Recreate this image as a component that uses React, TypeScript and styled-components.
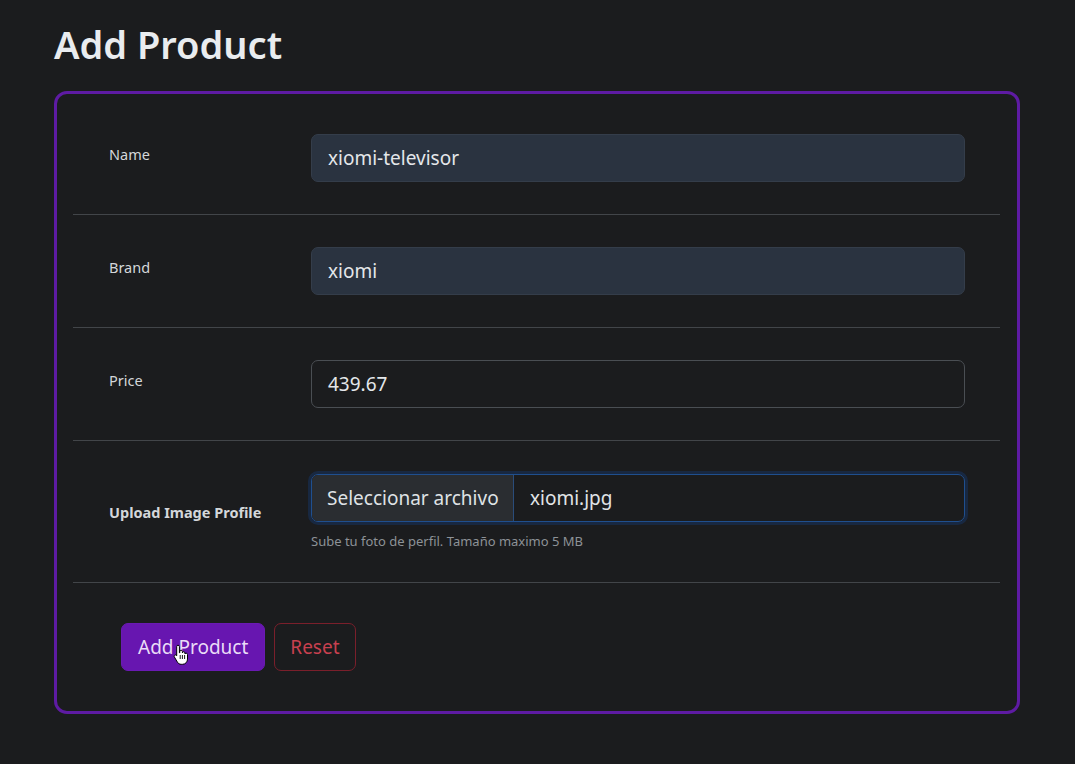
import React from "react";
import styled, { createGlobalStyle } from "styled-components";

const Global = createGlobalStyle`
  html, body { margin: 0; padding: 0; background: #1b1c1e; }
  body { font-family: "Noto Sans", "Open Sans", sans-serif; color: #dee2e6; }
  * { box-sizing: border-box; }
`;

const Page = styled.div`
  padding: 20px 55px 40px 54px;
  min-height: 764px;
`;

const Title = styled.h1`
  margin: 0 0 23px 0;
  font-size: 38px;
  line-height: 48px;
  font-weight: 600;
  color: #e9ecef;
`;

const Card = styled.form`
  border: 3px solid #5e1ba3;
  border-radius: 13px;
  padding: 0 17px 40px 16px;
  display: flex;
  flex-direction: column;
`;

const Row = styled.div<{ $top?: number }>`
  display: grid;
  grid-template-columns: 202px 1fr;
  align-items: center;
  padding: ${(p) => p.$top ?? 32}px 35px 32px 36px;
  border-bottom: 1px solid #424549;
`;

const Label = styled.label<{ $bold?: boolean }>`
  font-size: 14.5px;
  line-height: 20px;
  margin-bottom: ${(p) => (p.$bold ? 0 : 8)}px;
  color: #d4d7da;
  font-weight: ${(p) => (p.$bold ? 700 : 400)};
`;

const Input = styled.div<{ $filled?: boolean }>`
  height: 48px;
  display: flex;
  align-items: center;
  padding: 0 16px;
  font-size: 19px;
  color: #e4e7ea;
  border-radius: 7px;
  background: ${(p) => (p.$filled ? "#2a3340" : "transparent")};
  border: 1px solid ${(p) => (p.$filled ? "#343d4a" : "#4a4e53")};
`;

const FileCol = styled.div`
  display: flex;
  flex-direction: column;
`;

const FileBox = styled.div`
  height: 48px;
  display: flex;
  align-items: stretch;
  border: 1px solid #1f4f8f;
  border-radius: 7px;
  box-shadow: 0 0 0 3px rgba(20, 70, 150, 0.3);
  overflow: hidden;
  font-size: 19px;
`;

const FileButton = styled.span`
  display: flex;
  align-items: center;
  padding: 0 16px 0 15px;
  width: 202px;
  background: #2a2d31;
  border-right: 1px solid #2a4c7a;
  color: #dfe2e5;
  white-space: nowrap;
`;

const FileName = styled.span`
  display: flex;
  align-items: center;
  padding-left: 16px;
  color: #e1e4e7;
`;

const Help = styled.div`
  margin-top: 10px;
  font-size: 13px;
  color: #8d9297;
`;

const Actions = styled.div`
  display: flex;
  gap: 9px;
  padding: 40px 0 0 48px;
`;

const Button = styled.button<{ $variant: "primary" | "danger" }>`
  position: relative;
  height: 48px;
  padding: 0 ${(p) => (p.$variant === "primary" ? 16 : 15)}px;
  font-family: inherit;
  font-size: 19px;
  border-radius: 7px;
  cursor: pointer;
  ${(p) =>
    p.$variant === "primary"
      ? `background: #6716b0; border: 1px solid #6a1ab3; color: #eadcf7;`
      : `background: transparent; border: 1px solid #7a1f2b; color: #c8404f;`}
`;

const Cursor = styled.svg`
  position: absolute;
  left: 51px;
  top: 20px;
  width: 16px;
  height: 21px;
  pointer-events: none;
`;

const HandCursor = () => (
  <Cursor viewBox="0 0 16 21">
    <path
      d="M5 1.2c.8 0 1.4.6 1.4 1.4v6.2l.4-.1V7.5c0-.8.6-1.3 1.3-1.3s1.3.5 1.3 1.3v1.3c.1-.7.7-1.1 1.3-1.1.7 0 1.3.6 1.3 1.3v1c.2-.5.7-.8 1.2-.8.7 0 1.3.6 1.3 1.3v4.6c0 2.8-2 5.2-4.9 5.2H8.2c-1.6 0-2.8-.7-3.7-2L1.4 13c-.4-.6-.3-1.4.3-1.8.6-.4 1.3-.3 1.8.3l.2.3V2.6c0-.8.5-1.4 1.3-1.4z"
      fill="#fff"
      stroke="#000"
      strokeWidth="1"
    />
    <path d="M7.2 11v4M9.4 11v4M11.6 11v4" stroke="#000" strokeWidth="0.9" />
  </Cursor>
);

export default function App() {
  return (
    <>
      <Global />
      <Page>
        <Title>Add Product</Title>
        <Card>
          <Row $top={40}>
            <Label>Name</Label>
            <Input $filled>xiomi-televisor</Input>
          </Row>
          <Row>
            <Label>Brand</Label>
            <Input $filled>xiomi</Input>
          </Row>
          <Row>
            <Label>Price</Label>
            <Input>439.67</Input>
          </Row>
          <Row $top={33}>
            <Label $bold>Upload Image Profile</Label>
            <FileCol>
              <FileBox>
                <FileButton>Seleccionar archivo</FileButton>
                <FileName>xiomi.jpg</FileName>
              </FileBox>
              <Help>Sube tu foto de perfil. Tamaño maximo 5 MB</Help>
            </FileCol>
          </Row>
          <Actions>
            <Button type="button" $variant="primary">
              Add Product
              <HandCursor />
            </Button>
            <Button type="button" $variant="danger">
              Reset
            </Button>
          </Actions>
        </Card>
      </Page>
    </>
  );
}
